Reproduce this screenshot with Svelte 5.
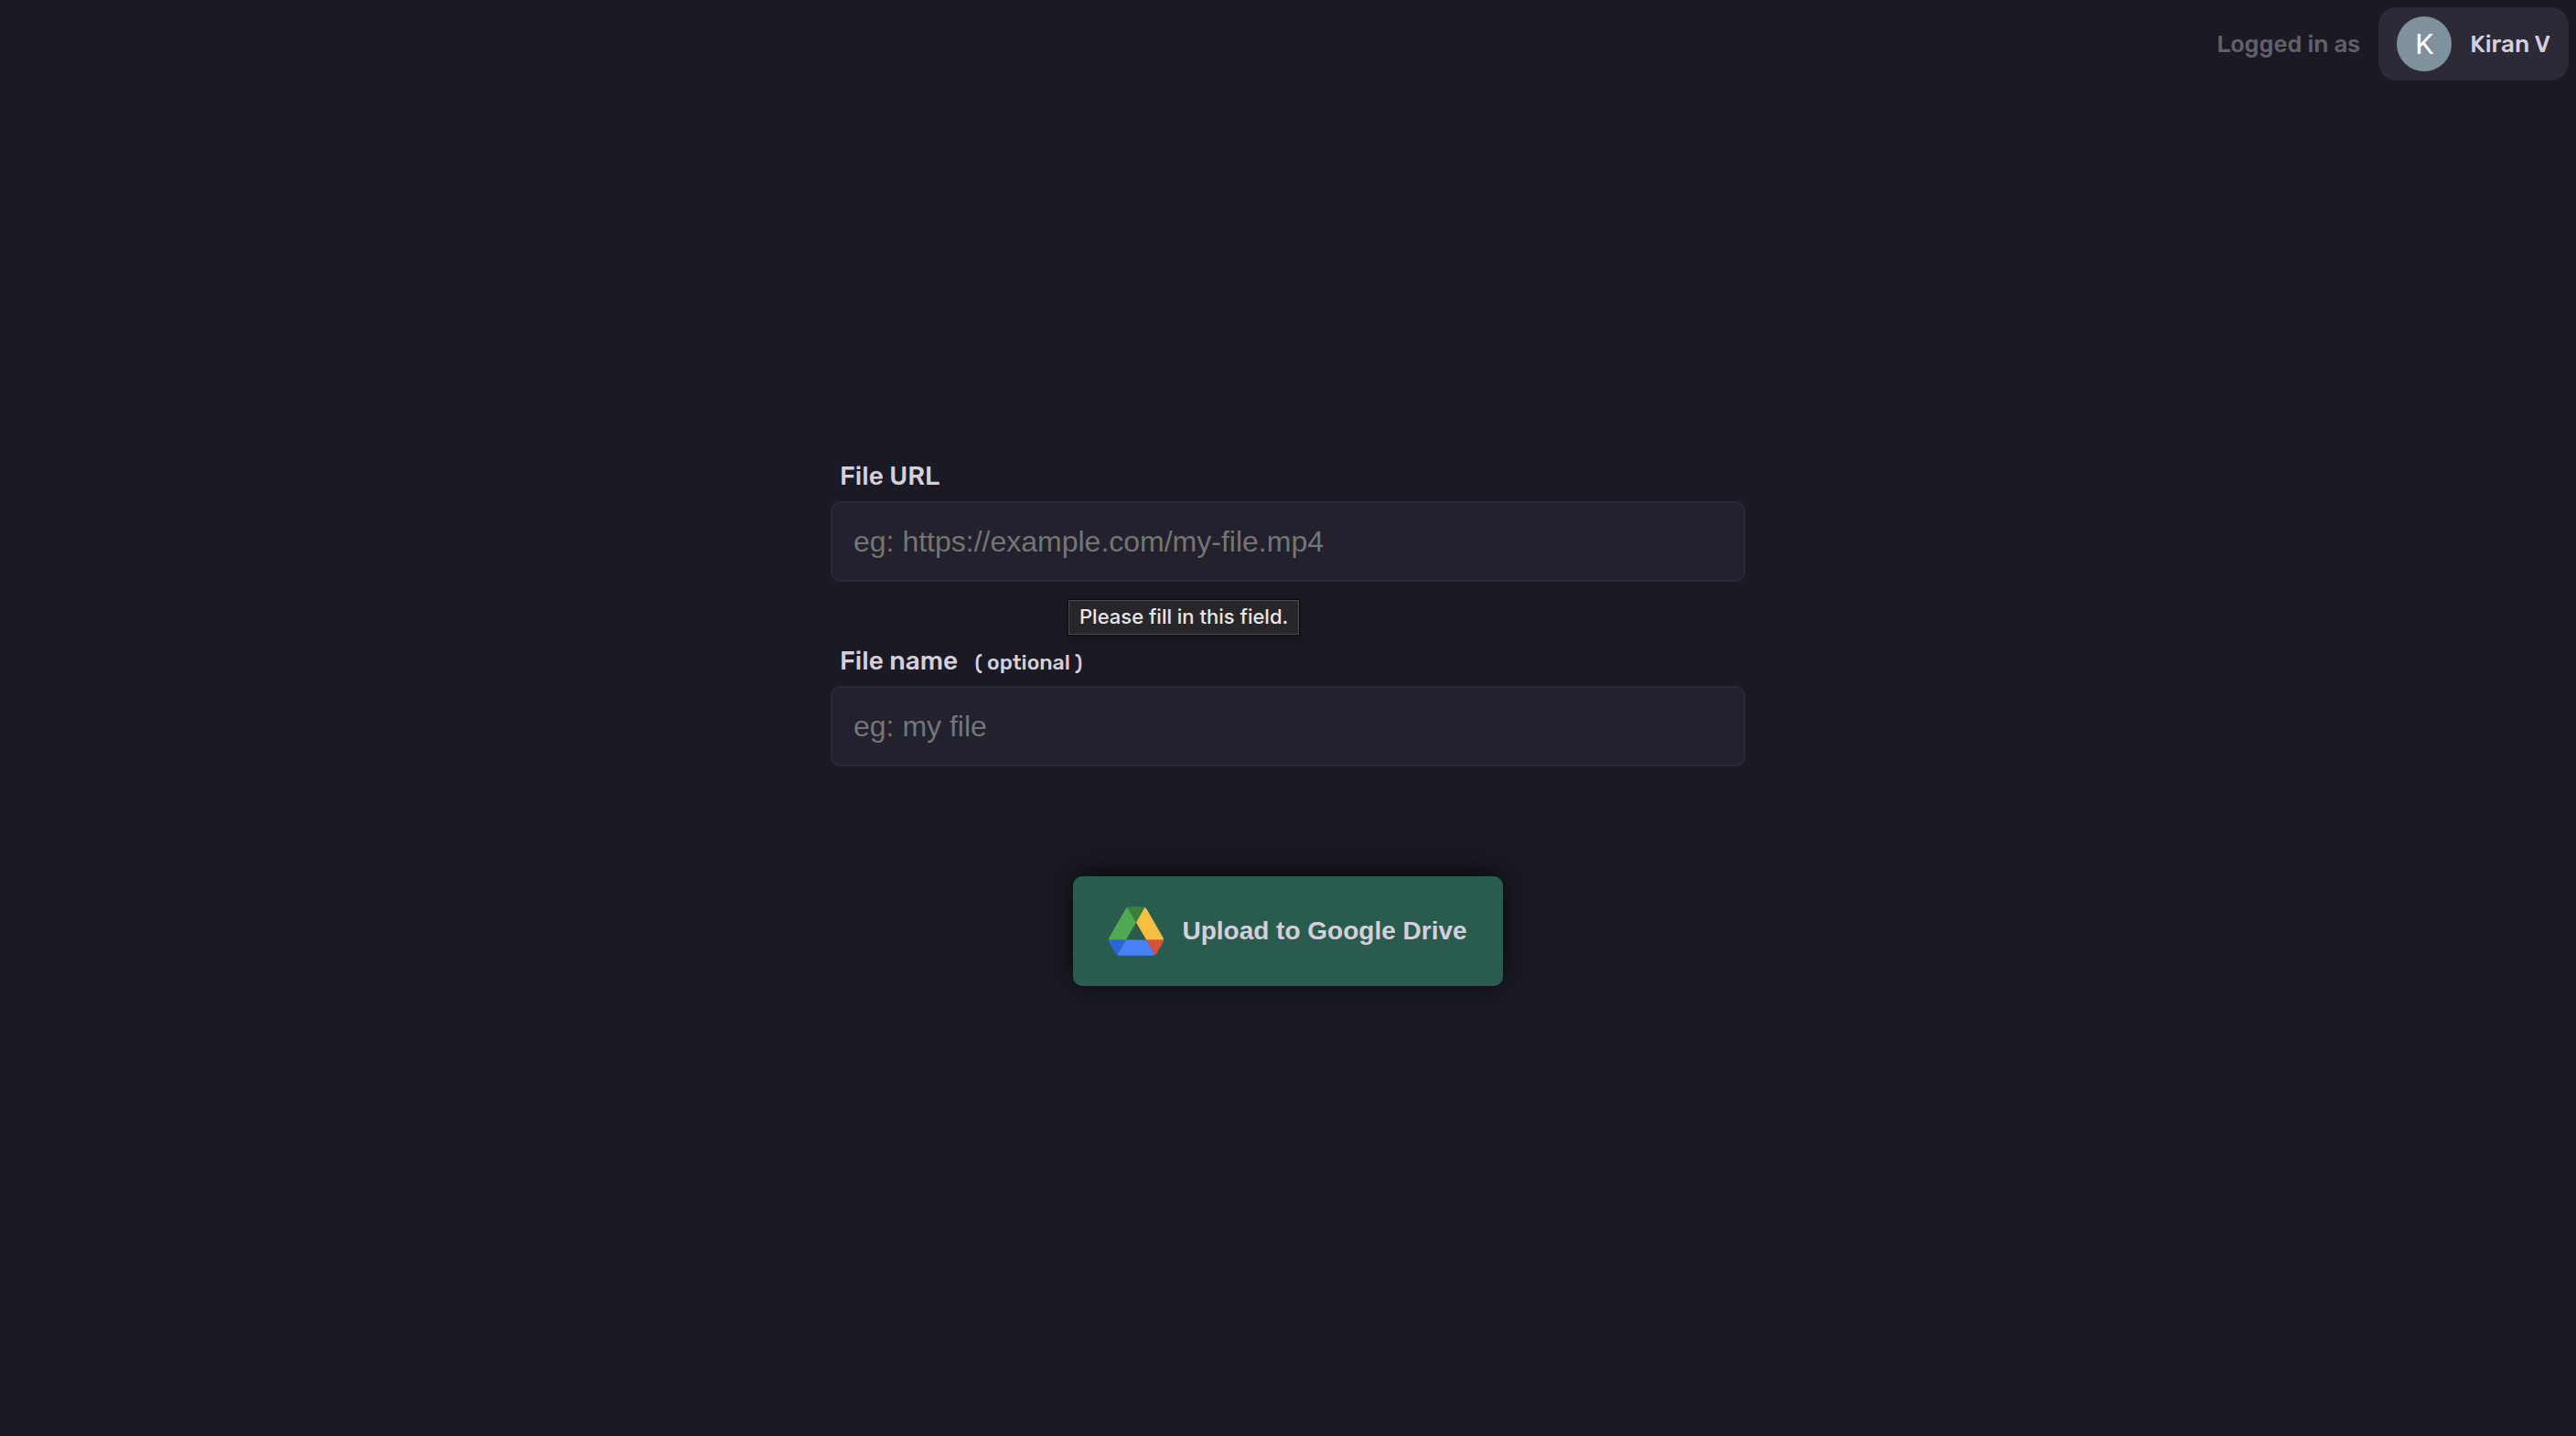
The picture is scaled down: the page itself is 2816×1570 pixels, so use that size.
<script>
  let user = { name: "Kiran V" };
  let fileUrl = $state("");
  let fileName = $state("");

  function upload(event) {
    event.preventDefault();
  }
</script>

<div class="page">
  <header>
    <span class="status">Logged in as</span>
    <button type="button" class="user">
      <span class="avatar">{user.name[0]}</span>
      <span>{user.name}</span>
    </button>
  </header>

  <form onsubmit={upload}>
    <div class="field">
      <label for="file-url">File URL</label>
      <input
        id="file-url"
        type="text"
        placeholder="eg: https://example.com/my-file.mp4"
        required
        bind:value={fileUrl} />
      <div class="tooltip" role="tooltip">Please fill in this field.</div>
    </div>

    <div class="field">
      <label for="file-name">File name <small>( optional )</small></label>
      <input
        id="file-name"
        type="text"
        placeholder="eg: my file"
        bind:value={fileName} />
    </div>

    <button type="submit" class="upload">
      <svg viewBox="0 0 87.3 78" aria-hidden="true">
        <path fill="#2a66d5" d="m6.6 66.85 3.85 6.65c.8 1.4 1.95 2.5 3.3 3.3l13.75-23.8h-27.5c0 1.55.4 3.1 1.2 4.5z" />
        <path fill="#4faa53" d="m43.65 25-13.75-23.8c-1.35.8-2.5 1.9-3.3 3.3l-25.4 44a9.06 9.06 0 0 0 -1.2 4.5h27.5z" />
        <path fill="#d8503f" d="m73.55 76.8c1.35-.8 2.5-1.9 3.3-3.3l1.6-2.75 7.65-13.25c.8-1.4 1.2-2.95 1.2-4.5h-27.5l5.85 11.5z" />
        <path fill="#3a8138" d="m43.65 25 13.75-23.8c-1.35-.8-2.9-1.2-4.5-1.2h-18.5c-1.6 0-3.15.45-4.5 1.2z" />
        <path fill="#4681f5" d="m59.8 53h-32.3l-13.75 23.8c1.35.8 2.9 1.2 4.5 1.2h50.8c1.6 0 3.15-.45 4.5-1.2z" />
        <path fill="#f6bf42" d="m73.4 26.5-12.7-22c-.8-1.4-1.95-2.5-3.3-3.3l-13.75 23.8 16.15 28h27.45c0-1.55-.4-3.1-1.2-4.5z" />
      </svg>
      Upload to Google Drive
    </button>
  </form>
</div>

<style>
  :global(body) {
    background: #1b1924;
  }

  .page {
    min-height: 100vh;
    display: grid;
    grid-template-rows: 1fr auto 1fr;
    color: #d3d0dc;
    font-family: Rubik, Inter, "Liberation Sans", sans-serif;
    font-weight: 500;
  }

  header {
    display: flex;
    align-items: center;
    align-self: start;
    justify-content: flex-end;
    gap: 20px;
    padding: 8px;
    font-size: 26px;
  }

  .status {
    color: #615f69;
  }

  .user {
    display: flex;
    align-items: center;
    gap: 20px;
    padding: 10px 20px;
    border: none;
    border-radius: 20px;
    background: #2c2a36;
    color: inherit;
    font: inherit;
    cursor: pointer;
  }

  .avatar {
    width: 60px;
    height: 60px;
    border-radius: 50%;
    background: #7e919c;
    color: #fff;
    font: 400 32px/60px Roboto, sans-serif;
    text-align: center;
  }

  form {
    box-sizing: border-box;
    width: 100%;
    max-width: 1000px;
    margin: 0 auto;
    padding-top: 12px;
    display: flex;
    flex-direction: column;
    align-items: center;
  }

  .field {
    position: relative;
    width: 100%;
    display: flex;
    flex-direction: column;
    gap: 10px;
  }

  .field + .field {
    margin-top: 70px;
  }

  label {
    padding-left: 10px;
    font-size: 28px;
    line-height: 34px;
  }

  small {
    margin-left: 12px;
    font-size: 23px;
    line-height: 1;
  }

  input {
    box-sizing: border-box;
    width: 100%;
    height: 88px;
    padding: 0 23px;
    border: 2px solid #2a2834;
    border-radius: 10px;
    outline: none;
    background: #22212d;
    color: inherit;
    font-family: "Liberation Sans", Arial, sans-serif;
    font-size: 32px;
  }

  input::placeholder {
    color: #757575;
  }

  .tooltip {
    position: absolute;
    top: calc(100% + 20px);
    left: 26%;
    padding: 0 11px 2px;
    border: 1px solid #4b4b4f;
    outline: 1px solid #0c0b10;
    background: #27262b;
    box-shadow: 0 4px 16px rgba(0, 0, 0, 0.3);
    color: #e6e6e6;
    font-family: Inter, sans-serif;
    font-size: 22px;
    line-height: 34px;
    white-space: nowrap;
  }

  .upload {
    display: flex;
    align-items: center;
    gap: 20px;
    height: 120px;
    margin-top: 120px;
    padding: 0 39px;
    border: none;
    border-radius: 10px;
    background: #295c4f;
    box-shadow: 0 -4px 32px rgba(0, 0, 0, 0.7);
    color: inherit;
    font: bold 28px "Liberation Sans", Arial, sans-serif;
    cursor: pointer;
  }

  .upload svg {
    width: 60px;
    height: 54px;
  }
</style>
